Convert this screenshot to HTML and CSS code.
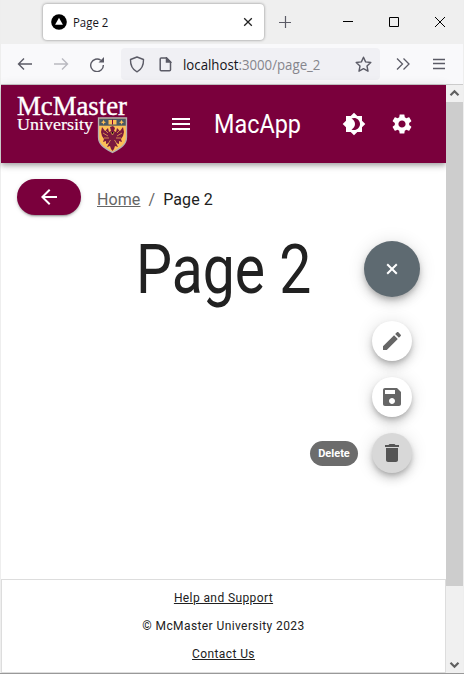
FILE: index.html
```
<!DOCTYPE html>
<html lang="en">
<head>
<meta charset="utf-8">
<title>Page 2</title>
<link rel="stylesheet" href="styles.css">
</head>
<body>
<div class="window">
  <div class="tabstrip">
    <div class="tab">
      <svg class="favicon" width="16" height="16" viewBox="0 0 16 16"><circle cx="8" cy="8" r="7.8"/><path d="M8 3.7l3.9 7H4.1z" fill="#fff"/></svg>
      <span class="tab-title"><span>Page 2</span></span>
      <svg class="tab-close" width="10" height="10" viewBox="0 0 10 10"><path d="M1.2 1.2l7.6 7.6M8.800 1.200L1.200 8.800" stroke="#222" stroke-width="1.3"/></svg>
    </div>
    <svg class="new-tab" width="12" height="12" viewBox="0 0 12 12"><path d="M6.500 0v12M0 6.500h12" stroke="#5b5b66" stroke-width="1.2"/></svg>
    <svg class="win-buttons" width="104" height="12" viewBox="0 0 104 12" fill="none" stroke="#000"><path d="M1 5.500h10M93 1l10 10M103 1L93 11"/><path d="M47.500 1.500h9v9h-9z"/></svg>
  </div>
  <div class="toolbar">
    <svg class="nav" width="90" height="16" viewBox="0 0 90 16" fill="none" stroke-width="1.4"><path d="M15 8H1.500M7 2.500L1.500 8L7 13.500" stroke="#5b5b66"/><path d="M37 8h13.500M45 2.500L50.500 8L45 13.500" stroke="#b9b9c0"/><path d="M83.800 4.300A6.300 6.300 0 1 0 86.300 9" stroke="#5b5b66"/><path d="M87 1v5.500h-5.500z" fill="#5b5b66"/></svg>
    <div class="urlbar">
      <svg width="16" height="17" viewBox="0 0 16 17" fill="none" stroke="#5b5b66" stroke-width="1.400"><path d="M8 1L14.500 3.500C14.700 9.500 12.500 13.500 8 15.800C3.500 13.500 1.300 9.500 1.500 3.500z" stroke-linejoin="round"/></svg>
      <svg class="doc" width="13" height="15" viewBox="0 0 13 15" fill="none" stroke="#5b5b66" stroke-width="1.500"><path d="M2.200 1h5.300L11.500 5v7.800q0 1-1 1H2.200q-1 0-1-1V2q0-1 1-1z"/><path d="M7.500 1v4h4z" fill="#5b5b66"/></svg>
      <span class="url"><span><b>localhost</b>:3000/page_2</span></span>
      <svg class="star" width="17" height="17" viewBox="0 0 17 17" fill="none" stroke="#5b5b66" stroke-width="1.400" stroke-linejoin="round"><path d="M8.500 1.200L10.600 5.900L15.800 6.500L12 10L13 15.200L8.500 12.600L4 15.200L5 10L1.200 6.500L6.400 5.900z"/></svg>
    </div>
    <svg class="tools" width="50" height="14" viewBox="0 0 50 14" fill="none" stroke="#5b5b66" stroke-width="1.300"><path d="M1 1.500L6.500 7L1 12.500M7.500 1.500L13 7L7.500 12.500M37 2.500h12M37 6.500h12M37 11.500h12"/></svg>
  </div>
  <div class="viewport">
    <div class="page">
      <header class="appbar">
        <svg class="logo" width="112" height="70" viewBox="0 -8 112 70">
          <g fill="#fff" stroke="#fff" font-family="Liberation Serif, serif"><text x="0" y="22" font-size="28" stroke-width=".4" textLength="110" lengthAdjust="spacingAndGlyphs">McMaster</text><text x="0" y="37" font-size="17.500" stroke-width=".2" textLength="76" lengthAdjust="spacingAndGlyphs">University</text></g>
          <path d="M81.500 25h28v19c0 8-6 11-14 15.500c-8-4.500-14-7.500-14-15.500z" fill="#fdbf57" stroke="#b5b1b1" stroke-width="1.300"/>
          <path d="M82.200 25.700h26.600v7H82.200z" fill="#495965"/>
          <path d="M91.500 27h8v4.500h-8z" fill="#fdbf57"/><path d="M95.500 26.500v5" stroke="#7a003c"/>
          <path d="M86.500 26.700l.8 1.700 1.700.8-1.700.8-.8 1.700-.8-1.700-1.700-.8 1.700-.8zM104.500 26.700l.8 1.700 1.700.8-1.700.8-.8 1.700-.8-1.700-1.700-.8 1.700-.8z" fill="#fdbf57"/>
          <path d="M85 34l-1 5 1 4 2 3-1 3 3-1 0 3 3-1-2 4 3-1 1 3 1.500 2 1.500-2 1-3 3 1-2-4 3 1 0-3 3 1-1-3 2-3 1-4-1-5-3 4-3-3-1 4-2-1 1-3-2-2-3 1 1 4-2 1-1-4-3 3z" fill="#7a183e"/>
          <path d="M86 40l5 3M105 40l-5 3M87 45h5M104 45h-5M94 39l1.500 3 1.500-3M91 51l2.500-4M100 51l-2.500-4M88 37l3 3M103 37l-3 3" stroke="#e6a452" stroke-width=".8"/>
        </svg>
        <svg class="menu" width="18" height="12" viewBox="0 0 18 12" fill="#fff"><path d="M0 0h18v2H0zM0 5h18v2H0zM0 10h18v2H0z"/></svg>
        <span class="brand"><span>MacApp</span></span>
        <svg class="bright" width="24" height="24" viewBox="0 0 24 24" fill="#fff"><path d="M20 8.690V4h-4.690L12 .690 8.690 4H4v4.690L.690 12 4 15.310V20h4.690L12 23.310 15.310 20H20v-4.690L23.310 12 20 8.690zM12 18c-.890 0-1.740-.200-2.500-.550C11.560 16.500 13 14.420 13 12s-1.440-4.500-3.500-5.450C10.260 6.200 11.110 6 12 6c3.310 0 6 2.690 6 6s-2.690 6-6 6z"/></svg>
        <svg class="gear" width="24" height="24" viewBox="0 0 24 24" fill="#fff"><path d="M19.140 12.940c.040-.300.060-.610.060-.940 0-.320-.020-.640-.070-.940l2.030-1.580c.180-.140.230-.410.120-.610l-1.920-3.320c-.120-.220-.370-.290-.590-.220l-2.390.960c-.500-.380-1.030-.700-1.620-.940l-.360-2.540c-.040-.240-.240-.410-.480-.410h-3.840c-.240 0-.430.170-.470.410l-.360 2.540c-.590.240-1.130.570-1.620.940l-2.390-.960c-.220-.080-.470 0-.590.220L2.740 8.870c-.120.210-.080.470.120.610l2.030 1.580c-.050.300-.090.630-.090.940s.020.640.070.940l-2.030 1.580c-.180.140-.230.410-.120.610l1.920 3.320c.120.220.370.290.590.220l2.390-.960c.500.380 1.030.700 1.620.940l.360 2.540c.050.240.240.410.480.410h3.840c.240 0 .440-.170.470-.410l.360-2.540c.590-.240 1.130-.560 1.620-.940l2.390.960c.220.080.470 0 .590-.220l1.920-3.320c.120-.220.070-.470-.120-.610l-2.010-1.580zM12 15.600c-1.980 0-3.600-1.620-3.600-3.600s1.620-3.600 3.600-3.600 3.600 1.620 3.600 3.600-1.620 3.600-3.600 3.600z"/></svg>
      </header>
      <main>
        <nav class="crumbs">
          <a class="back"><svg width="24" height="24" viewBox="0 0 24 24" fill="#fff"><path d="M20 11H7.830l5.590-5.590L12 4l-8 8 8 8 1.410-1.410L7.830 13H20v-2z"/></svg></a>
          <a class="home">Home</a><span class="slash">/</span><span>Page 2</span>
        </nav>
        <h1><span>Page 2</span></h1>
        <div class="dial">
          <div class="fab"><svg width="24" height="24" viewBox="0 0 24 24"><path d="M7.200 7.200l9.600 9.600M16.800 7.200l-9.600 9.600" stroke="#fff" stroke-width="2"/></svg></div>
          <div class="action"><svg width="24" height="24" viewBox="0 0 24 24"><path d="M3 17.250V21h3.750L17.810 9.940l-3.750-3.750L3 17.250zM20.710 7.040c.390-.390.390-1.020 0-1.410l-2.340-2.340c-.390-.390-1.020-.390-1.410 0l-1.830 1.830 3.750 3.750 1.830-1.830z"/></svg></div>
          <div class="action"><svg width="24" height="24" viewBox="0 0 24 24"><path d="M17 3H5c-1.110 0-2 .900-2 2v14c0 1.100.890 2 2 2h14c1.100 0 2-.900 2-2V7l-4-4zm-5 16c-1.660 0-3-1.340-3-3s1.340-3 3-3 3 1.340 3 3-1.340 3-3 3zm3-10H5V5h10v4z"/></svg></div>
          <div class="action hovered"><svg width="24" height="24" viewBox="0 0 24 24"><path d="M6 19c0 1.100.900 2 2 2h8c1.100 0 2-.900 2-2V7H6v12zM19 4h-3.500l-1-1h-5l-1 1H5v2h14V4z"/></svg><span class="tip">Delete</span></div>
        </div>
      </main>
      <footer><a>Help and Support</a><span>© McMaster University 2023</span><a>Contact Us</a></footer>
    </div>
    <div class="scrollbar">
      <svg width="17" height="17" viewBox="0 0 17 17" fill="none" stroke="#606060" stroke-width="2.200"><path d="M4.500 10.200L8.500 6.200L12.500 10.200"/></svg>
      <div class="thumb"></div>
      <svg width="17" height="17" viewBox="0 0 17 17" fill="none" stroke="#606060" stroke-width="2.200"><path d="M4.500 6.800L8.500 10.800L12.500 6.800"/></svg>
    </div>
  </div>
</div>
</body>
</html>
```
FILE: styles.css
```
* { box-sizing: border-box; }
body { margin: 0; width: 464px; height: 674px; overflow: hidden; background: #eee; font-family: Roboto, "Liberation Sans", sans-serif; color: #212121; }
svg { display: block; flex: none; }
.window { height: 674px; padding: 0 1px; display: flex; flex-direction: column; border-bottom: 1px solid #999; }
.tabstrip { height: 44px; flex: none; display: flex; background: #efefef; }
.tab { width: 221px; height: 36px; margin: 4px 0 0 42px; padding: 0 11px 0 8px; display: flex; align-items: center; background: #fff; border-radius: 4px; box-shadow: 0 0 3px rgba(0,0,0,.45); }
.tab-title { margin-left: 6px; flex: 1; font: 12px "Open Sans", sans-serif; color: #15141a; white-space: nowrap; }
.tab-title span { display: inline-block; transform: scaleX(.95); transform-origin: left; }
.new-tab { margin: 16px 0 0 15px; }
.win-buttons { margin: 16px 0 0 51px; }
.toolbar { height: 41px; flex: none; display: flex; align-items: center; background: #f9f9fb; border-bottom: 1px solid #ccc; }
.nav { margin-left: 16px; }
.urlbar { width: 259px; height: 32px; margin-left: 14px; padding: 0 8px; display: flex; align-items: center; background: #f0f0f4; border-radius: 4px; }
.doc { margin-left: 14px; }
.url { margin-left: 11px; flex: 1; width: 0; font: 14px "Open Sans", sans-serif; color: #85858c; white-space: nowrap; }
.url span { display: inline-block; transform: scaleX(.945); transform-origin: left; }
.url b { font-weight: 400; color: #15141a; }
.tools { margin-left: 16px; }
.viewport { flex: 1; display: flex; min-height: 0; }
.page { width: 445px; display: flex; flex-direction: column; background: #fff; }
.appbar { height: 78px; flex: none; display: flex; align-items: center; background: #7a003c; box-shadow: 0 2px 4px -1px rgba(0,0,0,.2), 0 4px 5px rgba(0,0,0,.14), 0 1px 10px rgba(0,0,0,.12); }
.logo { margin: -9px 0 0 16px; }
.menu { margin-left: 43px; }
.brand { width: 87px; margin-left: 24px; color: #fff; font-size: 26px; line-height: 32px; white-space: nowrap; }
.brand span, h1 span { display: inline-block; transform-origin: left; }
.brand span { transform: scaleX(.9); }
.bright { margin-left: 41px; }
.gear { margin-left: 24px; }
main { flex: 1; min-height: 0; position: relative; }
.crumbs { height: 36px; margin: 16px 0 0 16px; display: flex; align-items: center; font-size: 16px; line-height: 24px; letter-spacing: .1px; }
.crumbs > :nth-child(n+2) { padding-top: 5px; }
.back { width: 64px; height: 36px; border-radius: 18px; display: grid; place-items: center; background: #7a003c; box-shadow: 0 3px 1px -2px rgba(0,0,0,.2), 0 2px 2px rgba(0,0,0,.14), 0 1px 5px rgba(0,0,0,.12); }
.home { margin-left: 16px; color: #666; text-decoration: underline; }
.slash { margin: 0 8px; color: #666; }
h1 { margin: 15px 0 0 135px; font-size: 68px; line-height: 80px; font-weight: 400; white-space: nowrap; }
h1 span { transform: scaleX(.84); }
.dial { position: absolute; top: 78px; right: 26px; width: 56px; display: flex; flex-direction: column; align-items: center; gap: 16px; }
.fab { width: 56px; height: 56px; margin-bottom: 8px; border-radius: 50%; display: grid; place-items: center; background: #5e6a71; box-shadow: 0 3px 5px -1px rgba(0,0,0,.2), 0 6px 10px rgba(0,0,0,.14), 0 1px 18px rgba(0,0,0,.12); }
.action { position: relative; width: 40px; height: 40px; border-radius: 50%; display: grid; place-items: center; background: #fff; fill: #666; box-shadow: 0 3px 5px -1px rgba(0,0,0,.2), 0 6px 10px rgba(0,0,0,.14), 0 1px 18px rgba(0,0,0,.12); }
.hovered { background: #d8d8d8; fill: #555; }
.tip { position: absolute; right: 54px; top: 8px; width: 48px; height: 25px; border-radius: 12.5px; background: #6c6c6c; color: #fff; font-size: 11px; font-weight: 700; line-height: 25px; text-align: center; }
footer { height: 94px; flex: none; border: 1px solid #ddd; padding-top: 4px; display: flex; flex-direction: column; align-items: center; font-size: 12px; line-height: 28px; letter-spacing: .4px; }
footer a { text-decoration: underline; }
.scrollbar { width: 17px; display: flex; flex-direction: column; background: #f0f0f0; }
.thumb { height: 484px; margin-bottom: auto; background: #cdcdcd; }
```
